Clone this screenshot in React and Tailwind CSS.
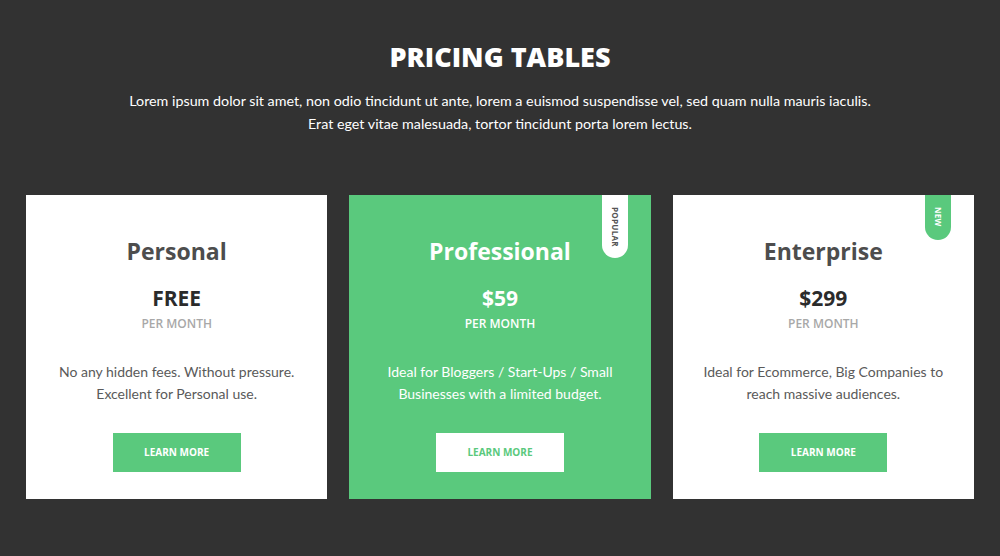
const plans = [
  {
    name: 'Personal',
    price: 'FREE',
    text: ['No any hidden fees. Without pressure.', 'Excellent for Personal use.'],
  },
  {
    name: 'Professional',
    price: '$59',
    text: ['Ideal for Bloggers / Start-Ups / Small', 'Businesses with a limited budget.'],
    featured: true,
    tag: 'POPULAR',
  },
  {
    name: 'Enterprise',
    price: '$299',
    text: ['Ideal for Ecommerce, Big Companies to', 'reach massive audiences.'],
    tag: 'NEW',
  },
];

function PlanCard({ plan }) {
  const { featured } = plan;
  return (
    <div
      className={`relative flex h-[304px] flex-col items-center ${
        featured ? 'bg-[#5ac97d]' : 'bg-white'
      }`}
    >
      {plan.tag && (
        <div
          className={`absolute right-[23px] top-0 flex w-[26px] justify-center rounded-b-full pt-[12px] ${
            featured ? 'h-[63px] bg-white text-[#555]' : 'h-[45px] bg-[#5ac97d] text-white'
          }`}
        >
          <span className="font-['Open_Sans',sans-serif] text-[8px] font-bold leading-none tracking-[0.3px] [writing-mode:vertical-rl]">
            {plan.tag}
          </span>
        </div>
      )}

      <h3
        className={`mt-[38px] font-['Open_Sans',sans-serif] text-[23px] font-bold leading-[36px] ${
          featured ? 'text-white' : 'text-[#4d4d4d]'
        }`}
      >
        {plan.name}
      </h3>
      <div
        className={`mt-[13px] font-['Open_Sans',sans-serif] text-[21px] font-bold leading-[32px] ${
          featured ? 'text-white' : 'text-[#2b2b2b]'
        }`}
      >
        {plan.price}
      </div>
      <div
        className={`mt-[1px] font-['Open_Sans',sans-serif] text-[12px] font-semibold leading-[18px] ${
          featured ? 'text-white' : 'text-[#a8a8a8]'
        }`}
      >
        PER MONTH
      </div>
      <p
        className={`mt-[28px] text-center font-['Lato',sans-serif] text-[14px] leading-[22px] ${
          featured ? 'text-white' : 'text-[#5a5a5a]'
        }`}
      >
        {plan.text[0]}
        <br />
        {plan.text[1]}
      </p>
      <button
        className={`mt-[28px] flex h-[39px] w-[128px] items-center justify-center font-['Open_Sans',sans-serif] text-[10px] font-bold ${
          featured ? 'bg-white text-[#5ac97d]' : 'bg-[#5ac97d] text-white'
        }`}
      >
        LEARN MORE
      </button>
    </div>
  );
}

export default function App() {
  return (
    <div className="flex min-h-[556px] w-full flex-col items-center bg-[#323232] px-[26px] pt-[38px]">
      <h1 className="font-['Open_Sans',sans-serif] text-[27px] font-extrabold leading-[38px] text-white">
        PRICING TABLES
      </h1>
      <p className="mt-[13px] text-center font-['Lato',sans-serif] text-[14.3px] leading-[23px] text-white">
        Lorem ipsum dolor sit amet, non odio tincidunt ut ante, lorem a euismod suspendisse vel, sed quam nulla mauris iaculis.
        <br />
        Erat eget vitae malesuada, tortor tincidunt porta lorem lectus.
      </p>
      <div className="mt-[60px] grid w-full grid-cols-3 gap-[22px]">
        {plans.map((p) => (
          <PlanCard key={p.name} plan={p} />
        ))}
      </div>
    </div>
  );
}
